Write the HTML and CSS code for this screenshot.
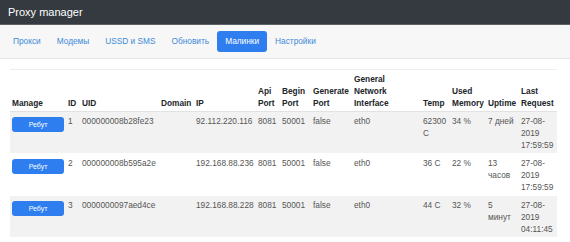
FILE: index.html
```html
<!DOCTYPE html>
<html lang="ru">
<head>
    <meta charset="UTF-8">
    <meta name="viewport" content="width=device-width, initial-scale=1.0">
    <title>Proxy manager</title>
    <link rel="stylesheet" href="styles.css">
</head>
<body>
    <header class="topbar">Proxy manager</header>

    <nav class="menu">
        <a href="#">Прокси</a>
        <a href="#">Модемы</a>
        <a href="#">USSD и SMS</a>
        <a href="#">Обновить</a>
        <a href="#" class="active">Малинки</a>
        <a href="#">Настройки</a>
    </nav>

    <div class="content">
        <table class="devices">
            <colgroup>
                <col class="c-manage"><col class="c-id"><col class="c-uid"><col class="c-domain">
                <col class="c-ip"><col class="c-api"><col class="c-begin"><col class="c-gen">
                <col class="c-iface"><col class="c-temp"><col class="c-mem"><col class="c-up">
                <col class="c-last">
            </colgroup>
            <thead>
                <tr>
                    <th>Manage</th>
                    <th>ID</th>
                    <th>UID</th>
                    <th>Domain</th>
                    <th>IP</th>
                    <th>Api Port</th>
                    <th>Begin Port</th>
                    <th>Generate Port</th>
                    <th>General<br>Network<br>Interface</th>
                    <th>Temp</th>
                    <th>Used Memory</th>
                    <th>Uptime</th>
                    <th>Last Request</th>
                </tr>
            </thead>
            <tbody>
                <tr>
                    <td><button class="btn">Ребут</button></td>
                    <td>1</td>
                    <td>000000008b28fe23</td>
                    <td></td>
                    <td>92.112.220.116</td>
                    <td>8081</td>
                    <td>50001</td>
                    <td>false</td>
                    <td>eth0</td>
                    <td>62300 C</td>
                    <td>34 %</td>
                    <td>7 дней</td>
                    <td>27-08-2019 17:59:59</td>
                </tr>
                <tr>
                    <td><button class="btn">Ребут</button></td>
                    <td>2</td>
                    <td>000000008b595a2e</td>
                    <td></td>
                    <td>192.168.88.236</td>
                    <td>8081</td>
                    <td>50001</td>
                    <td>false</td>
                    <td>eth0</td>
                    <td>36 C</td>
                    <td>22 %</td>
                    <td>13 часов</td>
                    <td>27-08-2019 17:59:59</td>
                </tr>
                <tr>
                    <td><button class="btn">Ребут</button></td>
                    <td>3</td>
                    <td>0000000097aed4ce</td>
                    <td></td>
                    <td>192.168.88.228</td>
                    <td>8081</td>
                    <td>50001</td>
                    <td>false</td>
                    <td>eth0</td>
                    <td>44 C</td>
                    <td>32 %</td>
                    <td>5 минут</td>
                    <td>27-08-2019 04:11:45</td>
                </tr>
            </tbody>
        </table>
    </div>
</body>
</html>
```

FILE: styles.css
```css
/* Global reset */
* {
    margin: 0;
    padding: 0;
    box-sizing: border-box;
}

body {
    font-family: "Liberation Sans", Arial, sans-serif;
    background: #ffffff;
    color: #212529;
    width: 570px;
    height: 242px;
    overflow: hidden;
}

/* Dark top bar */
.topbar {
    height: 25px;
    background: #343a40;
    border-bottom: 1px solid #5d6266;
    color: #ffffff;
    font-size: 11px;
    line-height: 24px;
    padding-left: 8px;
}

/* Menu pills */
.menu {
    display: flex;
    align-items: center;
    height: 34px;
    padding-left: 5px;
    background: #f7f7f7;
    border-bottom: 1px solid #e6e6e6;
}

.menu a {
    display: block;
    color: #3d8ad8;
    text-decoration: none;
    font-size: 8.3px;
    line-height: 21px;
    padding: 0 8px;
    border-radius: 3px;
}

.menu a.active {
    background: #2f7ef0;
    color: #ffffff;
}

/* Table */
.content {
    padding: 10px 13px 0 10px;
}

.devices {
    width: 547px;
    table-layout: fixed;
    border-collapse: collapse;
    border-top: 1px solid #eeeeee;
    font-size: 8.3px;
    line-height: 12px;
}

.c-manage { width: 56px; }
.c-id { width: 14px; }
.c-uid { width: 79px; }
.c-domain { width: 35px; }
.c-ip { width: 62px; }
.c-api { width: 24px; }
.c-begin { width: 31px; }
.c-gen { width: 41px; }
.c-iface { width: 69px; }
.c-temp { width: 29px; }
.c-mem { width: 36px; }
.c-up { width: 33px; }
.c-last { width: 38px; }

.devices th {
    text-align: left;
    vertical-align: bottom;
    font-weight: bold;
    color: #212529;
    padding: 3px 2px 2px;
    border-bottom: 1px solid #e2e2e2;
}

.devices td {
    vertical-align: top;
    color: #555555;
    padding: 3px 2px 2px;
    height: 41px;
    border-bottom: 1px solid #ffffff;
}

.devices tbody tr:nth-child(odd) {
    background: #f2f2f2;
}

.btn {
    display: block;
    width: 52px;
    height: 15px;
    margin-top: 2px;
    background: #2f7ef0;
    color: #ffffff;
    border: none;
    border-radius: 3px;
    font-family: "Liberation Sans", Arial, sans-serif;
    font-size: 7px;
    cursor: pointer;
}
```
